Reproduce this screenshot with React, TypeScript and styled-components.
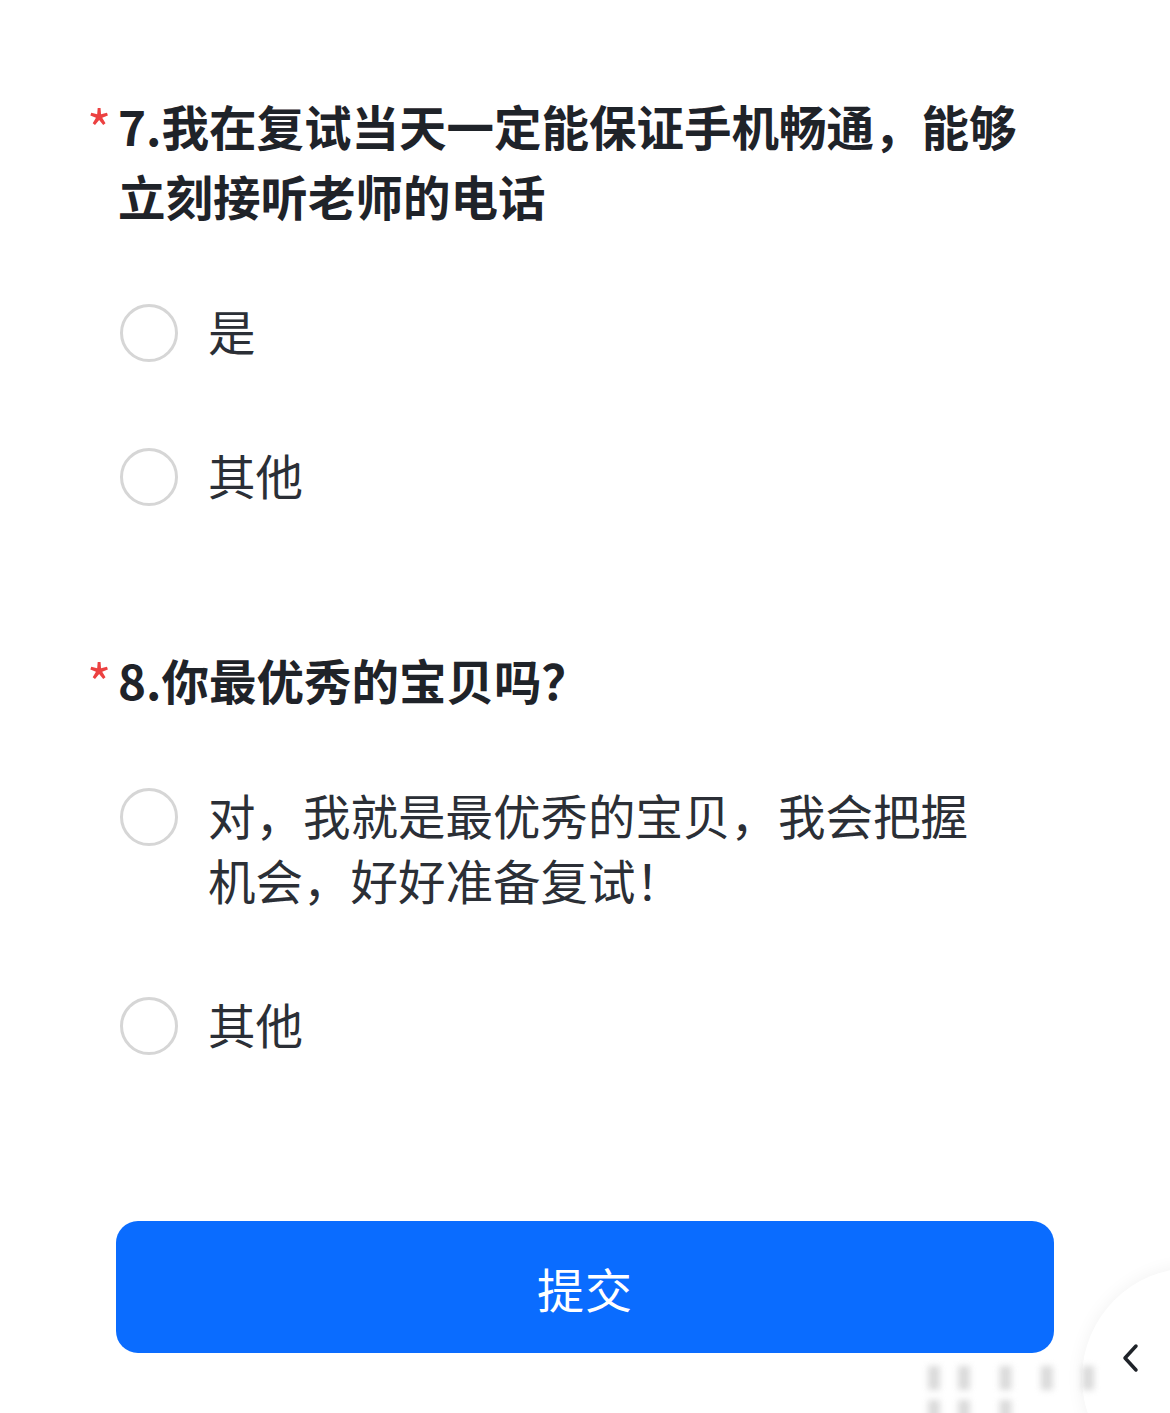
import styled, { createGlobalStyle } from "styled-components";

const GlobalStyle = createGlobalStyle`
  html, body {
    margin: 0;
    padding: 0;
    background: #ffffff;
  }
  body {
    font-family: "Noto Sans CJK SC", "Noto Sans", sans-serif;
  }
`;

const Page = styled.main`
  position: relative;
  width: 1170px;
  height: 1413px;
  overflow: hidden;
  box-sizing: border-box;
  padding: 91px 0 0 116px;
  background: #ffffff;
`;

const Question = styled.section<{ $gap: number }>`
  width: 938px;
  margin-bottom: ${(p) => p.$gap}px;
`;

const Title = styled.h2`
  position: relative;
  margin: 0 0 70px 0;
  padding-left: 2px;
  max-width: 920px;
  font-size: 47.5px;
  line-height: 70px;
  font-weight: 600;
  color: #1f2329;
`;

const Star = styled.span`
  position: absolute;
  left: -29px;
  top: 10px;
  font-size: 52px;
  line-height: 52px;
  font-weight: 400;
  color: #ec4141;
`;

const Options = styled.div`
  display: flex;
  flex-direction: column;
  gap: 79px;
  padding-left: 4px;
`;

const Option = styled.label`
  display: flex;
  align-items: flex-start;
  gap: 30px;
  cursor: pointer;
`;

const Radio = styled.span`
  flex: none;
  width: 58px;
  height: 58px;
  margin-top: 3px;
  box-sizing: border-box;
  border-radius: 50%;
  border: 3px solid #d6d6d6;
  background: #ffffff;
`;

const Label = styled.span`
  max-width: 790px;
  font-size: 47.5px;
  line-height: 65px;
  font-weight: 400;
  color: #2b2f36;
  transform: translateY(-3px);
`;

const Submit = styled.button`
  display: flex;
  align-items: center;
  justify-content: center;
  width: 938px;
  height: 132px;
  margin-top: 162px;
  border: none;
  border-radius: 22px;
  background: #0a6cff;
  color: #ffffff;
  font-family: "Noto Sans CJK SC", "Noto Sans", sans-serif;
  font-size: 47px;
  font-weight: 400;
  letter-spacing: 1px;
`;

const FloatButton = styled.div`
  position: absolute;
  left: 1082px;
  top: 1268px;
  width: 220px;
  height: 220px;
  box-sizing: border-box;
  padding: 72px 0 0 36px;
  border-radius: 50%;
  background: #ffffff;
  box-shadow: 0 0 18px rgba(0, 0, 0, 0.06);
`;

const Watermark = styled.div`
  position: absolute;
  left: 928px;
  top: 1360px;
  font-size: 24px;
  line-height: 34px;
  letter-spacing: 6px;
  color: #d2d2d2;
  filter: blur(3px);
  opacity: 0.8;
`;

type Q = { no: number; title: string; options: string[] };

const questions: Q[] = [
  {
    no: 7,
    title: "我在复试当天一定能保证手机畅通，能够立刻接听老师的电话",
    options: ["是", "其他"],
  },
  {
    no: 8,
    title: "你最优秀的宝贝吗？",
    options: ["对，我就是最优秀的宝贝，我会把握机会，好好准备复试！", "其他"],
  },
];

export default function App() {
  return (
    <>
      <GlobalStyle />
      <Page>
        {questions.map((q, i) => (
          <Question key={q.no} $gap={i === 0 ? 135 : 0}>
            <Title>
              <Star>*</Star>
              {q.no}.{q.title}
            </Title>
            <Options>
              {q.options.map((o) => (
                <Option key={o}>
                  <Radio />
                  <Label>{o}</Label>
                </Option>
              ))}
            </Options>
          </Question>
        ))}
        <Submit>提交</Submit>
        <FloatButton>
          <svg width="24" height="36" viewBox="0 0 24 36" fill="none">
            <path d="M18 6 L7 18 L18 30" stroke="#1f2329" strokeWidth="3.5" strokeLinecap="round" strokeLinejoin="round" />
          </svg>
        </FloatButton>
        <Watermark>▌▌ ▌ ▌ ▌ ▌▌ ▌</Watermark>
      </Page>
    </>
  );
}
